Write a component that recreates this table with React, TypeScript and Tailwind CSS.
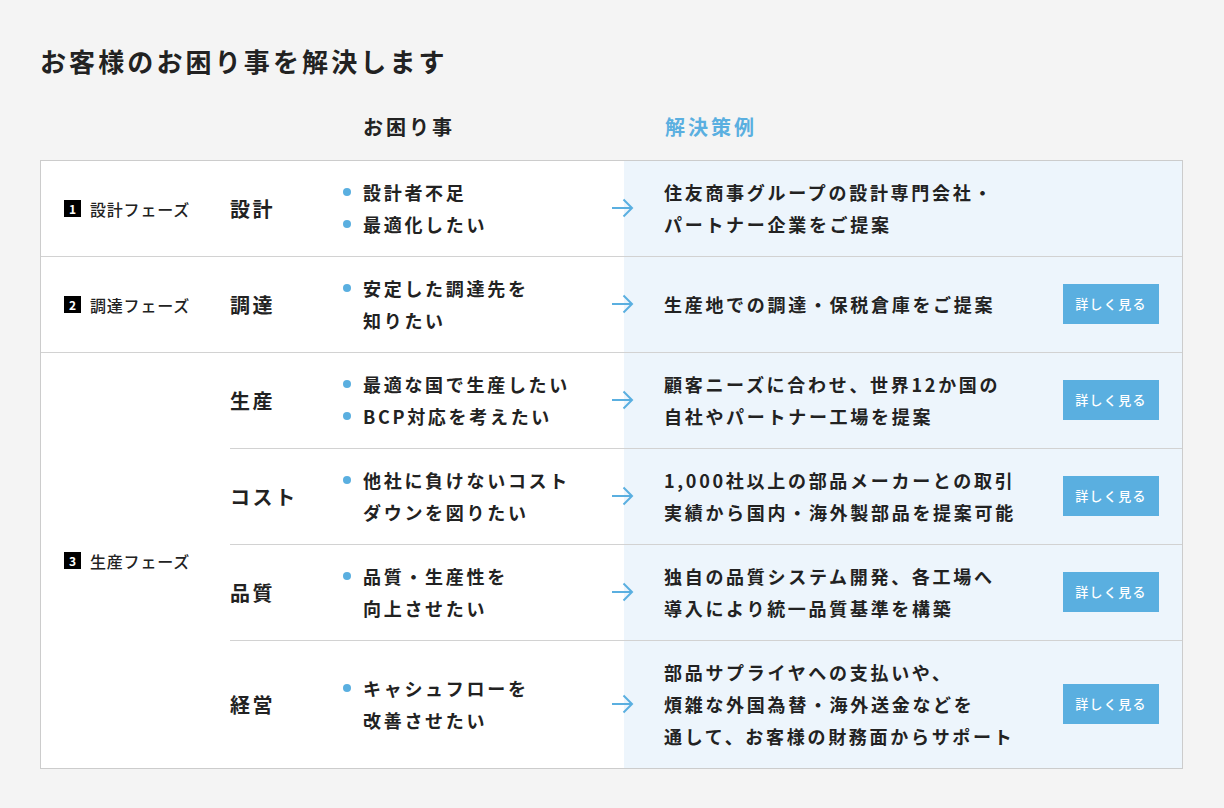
import React from "react";

const FONT = '"Noto Sans CJK JP", "Noto Sans", sans-serif';

type Sub = {
  cat: string;
  problems: string[][];
  solution: string[];
  button?: boolean;
};

type Phase = { no: number; label: string; subs: Sub[] };

const phases: Phase[] = [
  {
    no: 1,
    label: "設計フェーズ",
    subs: [
      {
        cat: "設計",
        problems: [["設計者不足"], ["最適化したい"]],
        solution: ["住友商事グループの設計専門会社・", "パートナー企業をご提案"],
      },
    ],
  },
  {
    no: 2,
    label: "調達フェーズ",
    subs: [
      {
        cat: "調達",
        problems: [["安定した調達先を", "知りたい"]],
        solution: ["生産地での調達・保税倉庫をご提案"],
        button: true,
      },
    ],
  },
  {
    no: 3,
    label: "生産フェーズ",
    subs: [
      {
        cat: "生産",
        problems: [["最適な国で生産したい"], ["BCP対応を考えたい"]],
        solution: ["顧客ニーズに合わせ、世界12か国の", "自社やパートナー工場を提案"],
        button: true,
      },
      {
        cat: "コスト",
        problems: [["他社に負けないコスト", "ダウンを図りたい"]],
        solution: ["1,000社以上の部品メーカーとの取引", "実績から国内・海外製部品を提案可能"],
        button: true,
      },
      {
        cat: "品質",
        problems: [["品質・生産性を", "向上させたい"]],
        solution: ["独自の品質システム開発、各工場へ", "導入により統一品質基準を構築"],
        button: true,
      },
      {
        cat: "経営",
        problems: [["キャシュフローを", "改善させたい"]],
        solution: [
          "部品サプライヤへの支払いや、",
          "煩雑な外国為替・海外送金などを",
          "通して、お客様の財務面からサポート",
        ],
        button: true,
      },
    ],
  },
];

function Arrow() {
  return (
    <svg width="23" height="20" viewBox="0 0 23 20" fill="none" className="shrink-0 -ml-[13px]">
      <path d="M1 10H21" stroke="#5aafe0" strokeWidth="2" />
      <path d="M12.5 1.5L21 10L12.5 18.5" stroke="#5aafe0" strokeWidth="2" />
    </svg>
  );
}

function SubRow({ sub, first }: { sub: Sub; first: boolean }) {
  return (
    <div className={`flex items-stretch ${first ? "" : "border-t border-[#d2d2d2]"}`}>
      <div className="w-[113px] shrink-0 flex items-center text-[20px] leading-[32px] font-bold tracking-[0.13em] text-[#222]">
        {sub.cat}
      </div>
      <div className="w-[281px] shrink-0 pt-[15px] pb-[16px] flex flex-col justify-center">
        {sub.problems.map((p, i) => (
          <div key={i} className="flex items-start gap-[12px]">
            <span className="mt-[12px] w-[8px] h-[8px] rounded-full bg-[#5aafe0] shrink-0" />
            <div className="text-[18px] leading-[32px] font-bold tracking-[0.15em] text-[#222]">
              {p.map((l, j) => (
                <div key={j}>{l}</div>
              ))}
            </div>
          </div>
        ))}
      </div>
      <div className="flex-1 bg-[#edf5fc] flex items-center pr-[23px] pt-[15px] pb-[16px]">
        <Arrow />
        <div className="ml-[30px] flex-1 text-[18px] leading-[32px] font-bold tracking-[0.15em] text-[#222]">
          {sub.solution.map((l, j) => (
            <div key={j}>{l}</div>
          ))}
        </div>
        {sub.button && (
          <div className="w-[96px] h-[40px] shrink-0 bg-[#5aafe0] text-white text-[13px] tracking-[0.1em] font-medium flex items-center justify-center">
            詳しく見る
          </div>
        )}
      </div>
    </div>
  );
}

export default function App() {
  return (
    <div
      className="min-h-screen bg-[#f4f4f4] pl-[40px] pr-[41px] pt-[41px] pb-[40px] text-[#222]"
      style={{ fontFamily: FONT }}
    >
      <h1 className="text-[26px] leading-[40px] font-bold tracking-[0.12em]">お客様のお困り事を解決します</h1>
      <div className="mt-[30px] mb-[17px] flex pl-[323px] text-[20px] leading-[32px] font-bold tracking-[0.15em]">
        <span className="w-[302px]">お困り事</span>
        <span className="text-[#5aafe0]">解決策例</span>
      </div>
      <div className="border border-[#cccccc] bg-white">
        {phases.map((ph, pi) => (
          <div key={ph.no} className={`flex items-stretch ${pi === 0 ? "" : "border-t border-[#d2d2d2]"}`}>
            <div className="w-[189px] shrink-0 flex items-center pl-[23px] gap-[9px]">
              <span className="w-[17px] h-[17px] bg-black text-white text-[12px] font-bold flex items-center justify-center leading-none">
                {ph.no}
              </span>
              <span className="text-[16px] font-medium tracking-[0.05em] text-[#222]">{ph.label}</span>
            </div>
            <div className="flex-1 flex flex-col">
              {ph.subs.map((s, si) => (
                <SubRow key={si} sub={s} first={si === 0} />
              ))}
            </div>
          </div>
        ))}
      </div>
    </div>
  );
}
